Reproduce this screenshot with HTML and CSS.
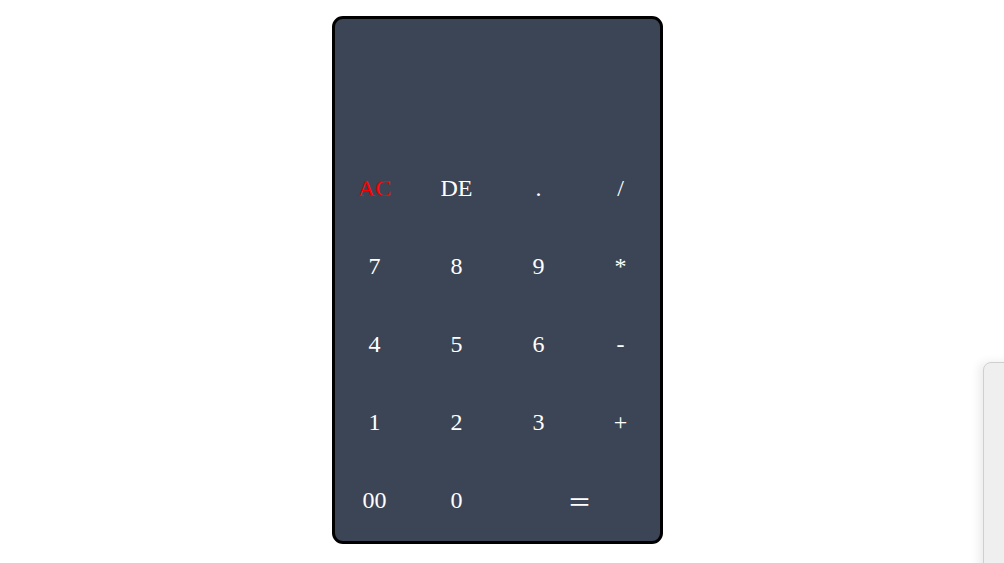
FILE: index.html
```html
<!DOCTYPE html>
<html>
<head>
<meta charset="utf-8">
<link rel="stylesheet" href="styles.css">
</head>
<body>
<div class="page">
  <div class="calc">
    <div class="display"></div>
    <div class="keys">
      <button class="key clear">AC</button>
      <button class="key">DE</button>
      <button class="key">.</button>
      <button class="key">/</button>
      <button class="key">7</button>
      <button class="key">8</button>
      <button class="key">9</button>
      <button class="key">*</button>
      <button class="key">4</button>
      <button class="key">5</button>
      <button class="key">6</button>
      <button class="key">-</button>
      <button class="key">1</button>
      <button class="key">2</button>
      <button class="key">3</button>
      <button class="key">+</button>
      <button class="key">00</button>
      <button class="key">0</button>
      <button class="key equal">＝</button>
    </div>
  </div>
</div>
<div class="side-panel"></div>
</body>
</html>
```
FILE: styles.css
```css
html, body {
  margin: 0;
  padding: 0;
  background: #ffffff;
  overflow: hidden;
}
.page {
  display: flex;
  justify-content: center;
  padding: 16px 9px 0 0;
}
.calc {
  width: 325px;
  height: 522px;
  background: #3c4555;
  border: 3px solid #000;
  border-radius: 11px;
  display: flex;
  flex-direction: column;
}
.display {
  height: 132px;
}
.keys {
  display: grid;
  grid-template-columns: repeat(4, 79px);
  grid-template-rows: repeat(5, 75px);
  gap: 3px;
}
.key {
  background: transparent;
  border: none;
  color: #ffffff;
  font-family: "Liberation Serif", "Noto Sans CJK SC", serif;
  font-size: 24px;
  padding: 0;
  display: flex;
  align-items: center;
  justify-content: center;
}
.clear {
  color: #ff0000;
}
.equal {
  grid-column: span 2;
}
.side-panel {
  position: fixed;
  left: 983px;
  top: 362px;
  width: 60px;
  height: 300px;
  background: #efefef;
  border: 1px solid #cfcfcf;
  border-radius: 8px;
  box-shadow: -4px 0 10px rgba(0, 0, 0, 0.08);
}
```
